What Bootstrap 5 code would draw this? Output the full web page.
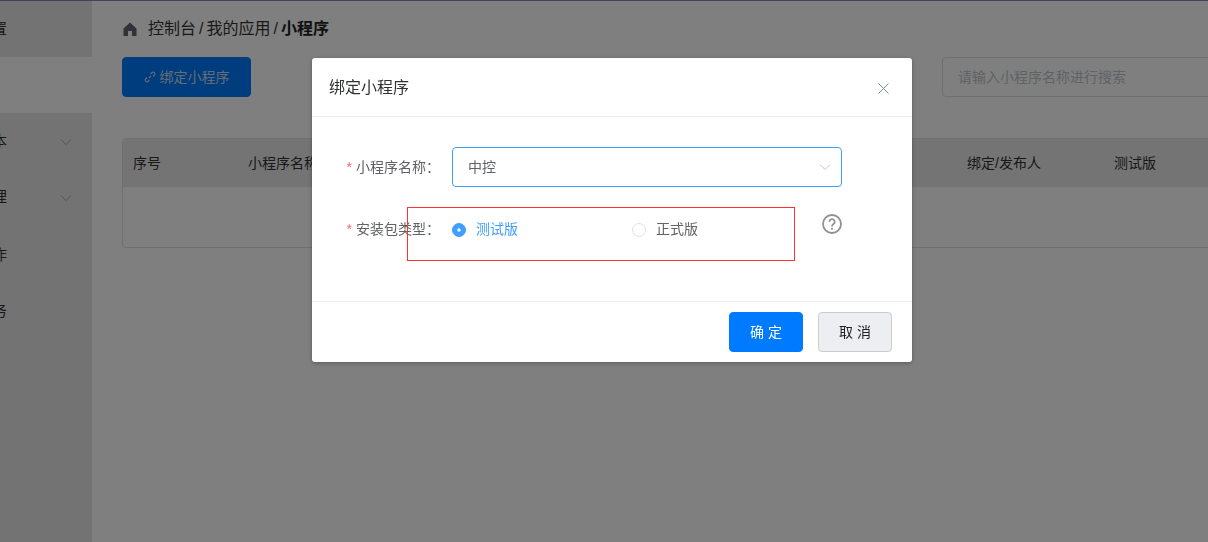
<!DOCTYPE html>
<html lang="zh-CN">
<head>
    <meta charset="UTF-8">
    <meta name="viewport" content="width=device-width, initial-scale=1.0">
    <title>绑定小程序</title>
    <link href="https://cdn.jsdelivr.net/npm/bootstrap@5.3.0/dist/css/bootstrap.min.css" rel="stylesheet">
    <style>
        html, body { height: 100%; overflow: hidden; }
        body {
            font-family: "Liberation Sans", "Noto Sans CJK SC", sans-serif;
            font-size: 14px;
            color: #303133;
            background: #fff;
        }
        .page-wrap { width: 1300px; height: 100%; border-top: 1px solid #7f8bbf; }
        .side-bar { width: 92px; flex: none; background: #e7e7e7; overflow: hidden; }
        .side-item {
            height: 56px;
            margin-left: -53px;
            width: 145px;
            padding: 1px 20px 0 0;
            font-size: 15px;
            color: #303133;
        }
        .side-item span { width: 60px; text-align: right; flex: none; }
        .side-item svg { flex: none; }
        .side-active { background: #fff; }
        .side-gap { margin-top: 2px; }
        .main-area { flex: 1; padding: 0 0 0 30px; }
        .crumb-row { height: 56px; font-size: 16px; color: #333; }
        .crumb-row svg { margin-right: 11px; margin-left: 1px; }
        .crumb-row i { font-style: normal; margin: 0 3px; }
        .crumb-row b { font-weight: 700; color: #222; }
        .tool-row { height: 40px; margin-bottom: 41px; }
        .bind-btn {
            width: 129px;
            height: 40px;
            background: #007bff;
            border-color: #007bff;
            font-size: 14px;
            color: #c8d8ea;
            border-radius: 4px;
            padding: 0;
        }
        .search-box {
            width: 300px;
            height: 40px;
            margin-left: 691px;
            font-size: 14px;
            border-color: #dcdfe6;
            padding-left: 15px;
            border-radius: 4px;
        }
        .search-box::placeholder { color: #c0c4cc; opacity: 1; }
        .app-table-wrap { border: 1px solid #dcdfe6; border-radius: 4px; overflow: hidden; width: 1150px; }
        .app-table { table-layout: fixed; width: 100%; margin: 0; }
        .app-table th {
            height: 48px;
            background: #e9e9e9;
            font-weight: 400;
            font-size: 14px;
            padding: 0 0 0 10px;
            vertical-align: middle;
            border: 0;
            color: #303133;
        }
        .app-table td { height: 60px; border: 0; }
        .col-no { width: 115px; }
        .col-name { width: 719px; }
        .col-user { width: 147px; }
        .bind-dialog { width: 600px; max-width: 600px; margin: 58px 0 0 312px; }
        .bind-dialog .modal-content { border: 0; border-radius: 3px; box-shadow: 0 1px 4px rgba(0, 0, 0, .3); }
        .bind-dialog .modal-header { height: 59px; padding: 2px 23px 0 17px; border-bottom-color: #ebeef5; }
        .bind-dialog .modal-title { font-size: 16px; font-weight: 400; color: #303133; line-height: 1.5; }
        .close-x { background: none; border: 0; padding: 0; line-height: 0; }
        .bind-dialog .modal-body { height: 184px; padding: 30px 0 0 0; position: relative; }
        .field-row { display: flex; align-items: center; }
        .field-row + .field-row { margin-top: 20px; height: 45px; }
        .field-label { width: 140px; text-align: right; padding-right: 12px; font-size: 14px; color: #606266; flex: none; white-space: nowrap; }
        .field-label em { font-style: normal; color: #f56c6c; margin-right: 4px; }
        .app-select {
            width: 390px;
            height: 40px;
            padding: 0 30px 0 15px;
            font-size: 14px;
            color: #606266;
            border-color: #409eff;
            border-radius: 4px;
            background-image: url("data:image/svg+xml,%3csvg xmlns='http://www.w3.org/2000/svg' viewBox='0 0 12 8'%3e%3cpath fill='none' stroke='%23c0c4cc' d='M1 1.5l5 5 5-5'/%3e%3c/svg%3e");
            background-size: 12px 8px;
            background-position: right 10px center;
        }
        .radio-line { width: 180px; margin: 0; padding: 0; display: flex; align-items: center; font-size: 14px; color: #606266; }
        .radio-line .form-check-input { width: 14px; height: 14px; margin: 0 10px 0 0; float: none; border-color: #dcdfe6; }
        .radio-line .form-check-input:checked {
            background-color: #409eff;
            border-color: #409eff;
            background-image: url("data:image/svg+xml,%3csvg xmlns='http://www.w3.org/2000/svg' viewBox='0 0 14 14'%3e%3ccircle cx='7' cy='7' r='2' fill='%23fff'/%3e%3c/svg%3e");
        }
        .radio-line.is-on { color: #409eff; }
        .help-mark { position: absolute; left: 510px; top: 97px; line-height: 0; }
        .mark-box { position: absolute; left: 95px; top: 90px; width: 388px; height: 54px; border: 1px solid #f33; pointer-events: none; }
        .bind-dialog .modal-footer { height: 61px; padding: 0 20px 0 0; border-top-color: #ebeef5; gap: 15px; }
        .bind-dialog .modal-footer .btn { margin: 0; width: 74px; height: 40px; padding: 0; font-size: 14px; border-radius: 4px; }
        .ok-btn { background: #007bff; border-color: #007bff; color: #fff; }
        .no-btn { background: #eceef1; border-color: #ccc; color: #222; }
    </style>
</head>
<body>
    <div class="page-wrap d-flex">
        <aside class="side-bar">
            <div class="side-item d-flex align-items-center"><span>设置</span></div>
            <div class="side-item side-active"></div>
            <div class="side-item d-flex align-items-center"><span>版本</span>
                <svg class="ms-auto" width="12" height="8" viewBox="0 0 12 8"><path d="M1 1.5l5 5 5-5" fill="none" stroke="#a8a8a8"/></svg></div>
            <div class="side-item d-flex align-items-center"><span>管理</span>
                <svg class="ms-auto" width="12" height="8" viewBox="0 0 12 8"><path d="M1 1.5l5 5 5-5" fill="none" stroke="#a8a8a8"/></svg></div>
            <div class="side-item side-gap d-flex align-items-center"><span>操作</span></div>
            <div class="side-item d-flex align-items-center"><span>任务</span></div>
        </aside>
        <main class="main-area">
            <div class="crumb-row d-flex align-items-center">
                <svg width="14" height="14" viewBox="0 0 14 14"><path d="M7 .5 .5 6.500V14h4.500V9h4v5h4.500V6.500z" fill="#5f6470"/></svg>
                <span>控制台</span><i>/</i><span>我的应用</span><i>/</i><b>小程序</b>
            </div>
            <div class="tool-row d-flex">
                <button type="button" class="btn bind-btn d-flex align-items-center justify-content-center gap-1">
                    <svg width="12" height="12" viewBox="0 0 12 12" fill="none" stroke="#c8d8ea" stroke-width="1.100"><path d="M5 7l2-2"/><path d="M6.500 3l1.500-1.500a1.800 1.800 0 0 1 2.500 2.500L9 5.500"/><path d="M5.500 9 4 10.500A1.800 1.800 0 0 1 1.500 8L3 6.500"/></svg>
                    绑定小程序
                </button>
                <input type="text" class="form-control search-box" placeholder="请输入小程序名称进行搜索">
            </div>
            <div class="app-table-wrap">
                <table class="table app-table">
                    <thead>
                        <tr>
                            <th class="col-no">序号</th>
                            <th class="col-name">小程序名称</th>
                            <th class="col-user">绑定/发布人</th>
                            <th>测试版</th>
                        </tr>
                    </thead>
                    <tbody>
                        <tr><td colspan="4"></td></tr>
                    </tbody>
                </table>
            </div>
        </main>
    </div>

    <div class="modal-backdrop show"></div>
    <div class="modal d-block" tabindex="-1">
        <div class="modal-dialog bind-dialog">
            <div class="modal-content">
                <div class="modal-header">
                    <h5 class="modal-title">绑定小程序</h5>
                    <button type="button" class="close-x ms-auto" aria-label="Close">
                        <svg width="11" height="11" viewBox="0 0 11 11"><path d="M.5.500l10 10M10.500.500l-10 10" stroke="#7d8a99" fill="none"/></svg>
                    </button>
                </div>
                <div class="modal-body">
                    <div class="field-row">
                        <label class="field-label"><em>*</em>小程序名称：</label>
                        <select class="form-select app-select"><option>中控</option></select>
                    </div>
                    <div class="field-row">
                        <label class="field-label"><em>*</em>安装包类型：</label>
                        <label class="radio-line is-on"><input class="form-check-input" type="radio" name="pkgType" checked>测试版</label>
                        <label class="radio-line"><input class="form-check-input" type="radio" name="pkgType">正式版</label>
                    </div>
                    <span class="help-mark">
                        <svg width="20" height="20" viewBox="0 0 20 20"><circle cx="10" cy="10" r="9" fill="none" stroke="#909090" stroke-width="1.800"/><path d="M7.300 7.800a2.700 2.700 0 1 1 4.200 2.300c-1 .7-1.500 1.200-1.500 2.300" fill="none" stroke="#909090" stroke-width="1.800"/><circle cx="10" cy="14.800" r="1.100" fill="#909090"/></svg>
                    </span>
                    <div class="mark-box"></div>
                </div>
                <div class="modal-footer">
                    <button type="button" class="btn ok-btn">确 定</button>
                    <button type="button" class="btn no-btn">取 消</button>
                </div>
            </div>
        </div>
    </div>

    <script src="https://cdn.jsdelivr.net/npm/bootstrap@5.3.0/dist/js/bootstrap.bundle.min.js"></script>
</body>
</html>
